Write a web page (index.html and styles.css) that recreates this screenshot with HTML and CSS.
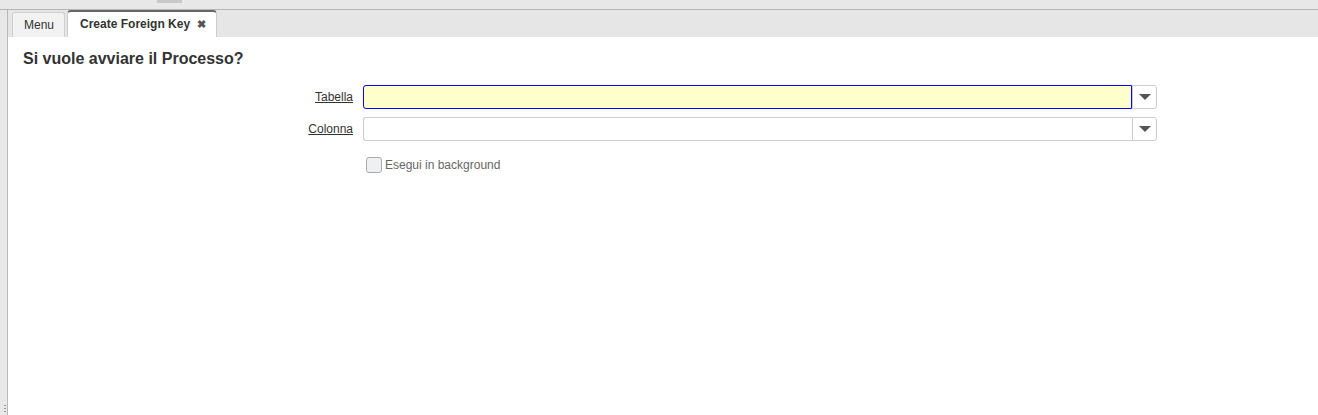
FILE: index.html
```html
<!DOCTYPE html>
<html>
<head>
<meta charset="utf-8">
<link rel="stylesheet" href="styles.css">
</head>
<body>
<div class="topstrip"><div class="handle"></div></div>
<div class="main">
  <div class="sidebar"><div class="grip"></div></div>
  <div class="panel">
    <div class="tabbar">
      <div class="tab">Menu</div>
      <div class="tab active">Create Foreign Key <span class="close">&#10006;</span></div>
    </div>
    <div class="content">
      <h1 class="title">Si vuole avviare il Processo?</h1>
      <div class="form">
        <label class="label">Tabella</label>
        <div class="combo focused">
          <div class="field"></div>
          <div class="btn"><span class="caret"></span></div>
        </div>
        <label class="label">Colonna</label>
        <div class="combo">
          <div class="field"></div>
          <div class="btn"><span class="caret"></span></div>
        </div>
        <div></div>
        <div class="check-row">
          <span class="checkbox"></span>
          <span class="check-label">Esegui in background</span>
        </div>
      </div>
    </div>
  </div>
</div>
</body>
</html>
```
FILE: styles.css
```css
html, body {
  margin: 0;
  padding: 0;
  height: 100%;
}
body {
  font-family: "Liberation Sans", Arial, sans-serif;
  font-size: 12px;
  color: #333;
  background: #fff;
  display: flex;
  flex-direction: column;
  overflow: hidden;
}
.topstrip {
  height: 9px;
  background: #e8e8e8;
  border-bottom: 1px solid #b5b5b5;
  position: relative;
  flex: none;
}
.handle {
  position: absolute;
  left: 157px;
  top: 0;
  width: 25px;
  height: 3px;
  background: #c8c8c8;
}
.main {
  flex: 1;
  display: flex;
}
.sidebar {
  width: 7px;
  background: #e8e8e8;
  border-right: 1px solid #b8b8b8;
  position: relative;
  flex: none;
}
.grip {
  position: absolute;
  left: 4px;
  bottom: 2px;
  width: 2px;
  height: 8px;
  background: repeating-linear-gradient(#999 0 1px, transparent 1px 3px);
}
.panel {
  flex: 1;
  display: flex;
  flex-direction: column;
}
.tabbar {
  height: 27px;
  background: #e6e6e6;
  display: flex;
  align-items: flex-end;
  padding-left: 4px;
  gap: 2px;
  flex: none;
}
.tab {
  height: 24px;
  line-height: 24px;
  padding: 0 10px 0 11px;
  border: 1px solid #cfcfcf;
  border-bottom: 0;
  border-radius: 3px 3px 0 0;
  background: #f2f2f2;
  color: #333;
  font-size: 12px;
}
.tab.active {
  height: 25px;
  line-height: 25px;
  background: #fff;
  font-weight: bold;
  border-color: #ccc;
  border-top: 2px solid #666;
  border-radius: 4px 4px 0 0;
  padding: 0 10px 0 12px;
}
.close {
  font-size: 11px;
  color: #555;
  margin-left: 4px;
}
.content {
  flex: 1;
  background: #fff;
  padding: 12px 15px;
}
.title {
  margin: 0 0 16px 0;
  font-size: 16px;
  font-weight: bold;
  color: #333;
  line-height: 20px;
}
.form {
  display: grid;
  grid-template-columns: 330px 794px;
  column-gap: 10px;
  row-gap: 8px;
  align-items: center;
}
.label {
  text-align: right;
  text-decoration: underline;
  color: #333;
  font-size: 12px;
}
.combo {
  display: flex;
  height: 24px;
}
.field {
  flex: 1;
  border: 1px solid #ccc;
  border-right: 0;
  border-radius: 3px 0 0 3px;
  background: #fff;
}
.combo.focused .field {
  background: #ffffcc;
  border: 1px solid #0000ff;
  border-radius: 3px 0 0 3px;
}
.btn {
  width: 23px;
  border: 1px solid #ccc;
  border-radius: 0 3px 3px 0;
  display: flex;
  align-items: center;
  justify-content: center;
  background: #fff;
}
.caret {
  width: 0;
  height: 0;
  border-left: 6px solid transparent;
  border-right: 6px solid transparent;
  border-top: 6px solid #555;
}
.check-row {
  display: flex;
  align-items: center;
  gap: 3px;
  margin-top: 8px;
  padding-left: 3px;
}
.checkbox {
  width: 14px;
  height: 14px;
  border: 1px solid #aaa;
  border-radius: 3px;
  background: #eef0f2;
}
.check-label {
  color: #666;
  font-size: 12px;
}
```
